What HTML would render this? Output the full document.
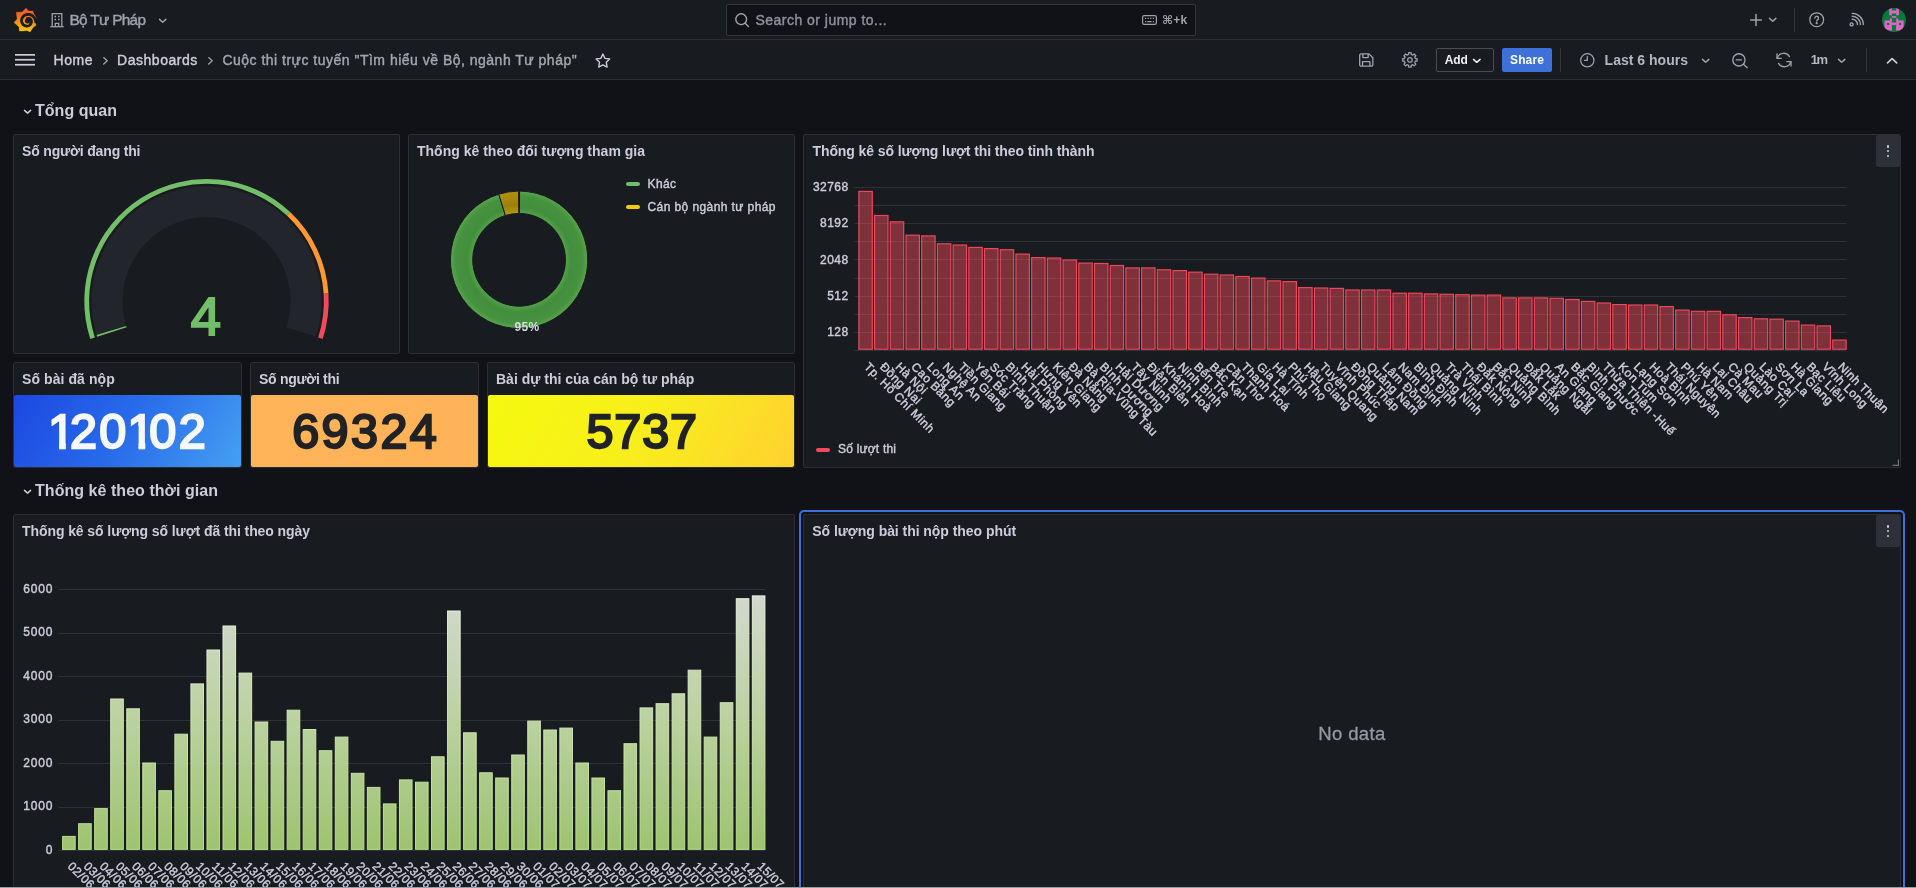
<!DOCTYPE html>
<html lang="vi"><head><meta charset="utf-8"><title>Cuộc thi trực tuyến "Tìm hiểu về Bộ, ngành Tư pháp" - Grafana</title>
<style>
html,body{margin:0;padding:0;background:#111217;}
body{width:1916px;height:888px;overflow:hidden;position:relative;font-family:"Liberation Sans", "DejaVu Sans", sans-serif;color:#ccccdc;}
.t{position:absolute;white-space:nowrap;}
#root{position:absolute;left:0;top:0;width:1916px;height:888px;overflow:hidden;will-change:transform;}
.abs{position:absolute;}
.panel{position:absolute;box-sizing:border-box;background:#181b1f;border:1px solid #2c2e33;border-radius:2px;}
svg{position:absolute;overflow:visible;}
svg text{font-family:"Liberation Sans", "DejaVu Sans", sans-serif;}
.lb text{stroke:#ccccdc;stroke-width:0.4px;}
</style></head><body><div id="root">
<div class="abs" style="left:0;top:0;width:1916px;height:39px;background:#181b1f;border-bottom:1px solid #2c2e33;"></div>
<div class="abs" style="left:0;top:40px;width:1916px;height:39px;background:#181b1f;border-bottom:1px solid #2c2e33;"></div>
<svg class="abs" style="left:4px;top:0" width="46" height="40" viewBox="0 0 1021 888"><defs><linearGradient id="lg" gradientUnits="userSpaceOnUse" x1="0" y1="170" x2="0" y2="715"><stop offset="0" stop-color="#f05a28"/><stop offset="0.3" stop-color="#f26a24"/><stop offset="1" stop-color="#fbca0a"/></linearGradient></defs><path d="M490,178 L545,242 L640,242 L660,302 L712,378 L708,445 L688,470 L712,562 L652,606 L578,710 L510,678 L430,686 L340,688 L333,598 L222,500 L291,420 L270,272 L402,266Z" fill="url(#lg)" stroke="url(#lg)" stroke-width="6" stroke-linejoin="round"/><path d="M708,512 L705,485 L699,459 L693,434 L684,411 L671,390 L657,371 L640,355 L621,342 L601,332 L580,325 L559,321 L538,320 L518,322 L498,325 L479,330 L461,338 L445,348 L430,361 L418,375 L407,390 L399,407 L393,425 L390,442 L390,461 L392,478 L396,495 L403,511 L412,526 L422,540 L435,551 L448,561 L463,568 L478,574 L494,577 L510,577 L526,576 L541,572 L555,566 L567,558 L579,548 L588,538 L596,526 L602,514 L606,501 L609,488 L609,475 L607,462 L602,450 L596,440 L589,430 L581,423 L572,417 L562,412 L553,409 L543,408 L534,409 L526,410 L518,413 L511,418 L506,424" fill="none" stroke="#181b1f" stroke-width="62" stroke-linecap="butt" stroke-linejoin="round"/><circle cx="524" cy="467" r="60" fill="#181b1f"/><path d="M476,515 Q505,556 548,534" fill="none" stroke="#f8a016" stroke-width="18" stroke-linecap="round"/></svg>
<svg style="left:50px;top:12px" width="14" height="16" viewBox="0 0 14 16" fill="none" stroke="#9fa1ae" stroke-width="1.3">
<path d="M2.2 14.6V1.6h9.6v13"/><path d="M0.3 14.7h13.4"/><path d="M5.3 14.6v-3.2h3.4v3.2"/>
<path d="M4.4 4.5h1.6M8 4.5h1.6M4.4 7.5h1.6M8 7.5h1.6" stroke-width="1.5"/></svg>
<div class="t" style="left:69.5px;top:8.70px;font-size:15.4px;line-height:22px;font-weight:400;color:#9fa1ae;letter-spacing:-0.694px;-webkit-text-stroke:0.4px #9fa1ae;">Bộ Tư Pháp</div>
<svg style="left:158.6px;top:19.08px" width="7.4" height="3.85" viewBox="0 0 7.4 3.85" fill="none" stroke="#9fa1ae" stroke-width="1.5" stroke-linecap="round" stroke-linejoin="round"><path d="M0.5 0.4L3.7 3.25L6.9 0.4"/></svg>
<div class="abs" style="left:726px;top:4px;width:468px;height:30px;background:#111217;border:1px solid #33353c;border-radius:2px;"></div>
<svg style="left:735px;top:13px" width="14" height="14" viewBox="0 0 14 14" fill="none" stroke="#9fa1ae" stroke-width="1.4" stroke-linecap="round"><circle cx="6.2" cy="6.2" r="5.4"/><path d="M10.2 10.2L13.4 13.4"/></svg>
<div class="t" style="left:755.5px;top:10.00px;font-size:14px;line-height:20px;font-weight:400;color:#8e909d;letter-spacing:0.475px;-webkit-text-stroke:0.4px #8e909d;">Search or jump to...</div>
<svg style="left:1141.5px;top:15px" width="15" height="10" viewBox="0 0 15 10" fill="none" stroke="#9fa1ae" stroke-width="1.2"><rect x="0.6" y="0.6" width="13.8" height="8.8" rx="1.6"/><path d="M3 3.4h9" stroke-dasharray="1.2 1.4"/><path d="M3 6.6h1.2M5.4 6.6h4.2M10.8 6.6h1.2"/></svg>
<div class="t" style="left:1162px;top:11.50px;font-size:12px;line-height:17px;font-weight:700;color:#9fa1ae;letter-spacing:0.2px;font-family:"DejaVu Sans","Liberation Sans",sans-serif;font-size:11.5px;">⌘+k</div>
<svg style="left:1750px;top:14px" width="12" height="12" viewBox="0 0 12 12" fill="none" stroke="#9fa1ae" stroke-width="1.5" stroke-linecap="round"><path d="M6 0.6v10.8M0.6 6h10.8"/></svg>
<svg style="left:1769.4px;top:18.38px" width="7.4" height="3.85" viewBox="0 0 7.4 3.85" fill="none" stroke="#9fa1ae" stroke-width="1.5" stroke-linecap="round" stroke-linejoin="round"><path d="M0.5 0.4L3.7 3.25L6.9 0.4"/></svg>
<div class="abs" style="left:1794px;top:8px;width:1px;height:24px;background:#34363d"></div>
<svg style="left:1809px;top:12.4px" width="15.4" height="15.4" viewBox="0 0 16 16" fill="none" stroke="#9fa1ae" stroke-width="1.3" stroke-linecap="round"><circle cx="8" cy="8" r="7.2"/><path d="M6.1 6.3a1.9 1.9 0 1 1 2.7 1.8c-.6.3-.8.7-.8 1.3" stroke-width="1.4"/><circle cx="8" cy="11.6" r="0.5" fill="#9fa1ae"/></svg>
<svg style="left:1848.6px;top:13.4px" width="15" height="14" viewBox="0 0 15 14" fill="none" stroke="#9fa1ae" stroke-width="1.4" stroke-linecap="round"><circle cx="2.6" cy="11.4" r="1.5"/><path d="M3.2 6.3a5.3 5.3 0 0 1 5.3 5.3"/><path d="M3.2 3.3a8.3 8.3 0 0 1 8.3 8.3"/><path d="M3.2 0.4a11.2 11.2 0 0 1 11.2 11.2"/></svg>
<svg style="left:1882px;top:8px" width="24" height="24" viewBox="0 0 24 24"><defs><clipPath id="av"><circle cx="12" cy="12" r="12"/></clipPath></defs>
<g clip-path="url(#av)"><rect width="24" height="24" fill="#057a3c"/>
<g fill="#e264c6"><rect x="7.2" y="0" width="2.7" height="7.3"/><rect x="14.2" y="0" width="2.7" height="7.3"/><rect x="9.8" y="2.5" width="4.5" height="2.9"/>
<rect x="9.9" y="8.1" width="4.3" height="1.7"/>
<rect x="7.9" y="10.4" width="2" height="12"/><rect x="14.2" y="10.4" width="2" height="12"/>
<rect x="2.5" y="12.4" width="5.6" height="9"/><rect x="16" y="12.4" width="5.6" height="9"/>
<rect x="9.8" y="14.5" width="4.5" height="2.4"/>
<rect x="5" y="19" width="5" height="3.4"/><rect x="14.2" y="19" width="5" height="3.4"/></g>
<rect x="5" y="14.9" width="2.2" height="2.2" fill="#057a3c"/><rect x="16.9" y="14.9" width="2.2" height="2.2" fill="#057a3c"/>
</g></svg>
<svg style="left:15px;top:54.2px" width="20" height="12" viewBox="0 0 20 12" fill="#ccccdc"><rect y="0" width="20" height="1.7"/><rect y="4.9" width="20" height="1.7"/><rect y="9.9" width="20" height="1.7"/></svg>
<div class="t" style="left:53.6px;top:50.00px;font-size:14px;line-height:20px;font-weight:400;color:#ccccdc;letter-spacing:0.514px;-webkit-text-stroke:0.4px #ccccdc;">Home</div>
<svg style="left:102.6px;top:56.6px" width="5" height="7.6" viewBox="0 0 5 7.6" fill="none" stroke="#9fa1ae" stroke-width="1.3" stroke-linecap="round" stroke-linejoin="round"><path d="M0.7 0.6L4.2 3.8L0.7 7"/></svg>
<div class="t" style="left:117.1px;top:50.00px;font-size:14px;line-height:20px;font-weight:400;color:#ccccdc;letter-spacing:0.522px;-webkit-text-stroke:0.4px #ccccdc;">Dashboards</div>
<svg style="left:208px;top:56.6px" width="5" height="7.6" viewBox="0 0 5 7.6" fill="none" stroke="#9fa1ae" stroke-width="1.3" stroke-linecap="round" stroke-linejoin="round"><path d="M0.7 0.6L4.2 3.8L0.7 7"/></svg>
<div class="t" style="left:222.4px;top:50.00px;font-size:14px;line-height:20px;font-weight:400;color:#a3a5b2;letter-spacing:0.494px;-webkit-text-stroke:0.4px #a3a5b2;">Cuộc thi trực tuyến "Tìm hiểu về Bộ, ngành Tư pháp"</div>
<svg style="left:595.4px;top:52.6px" width="15.8" height="15" viewBox="0 0 24 23" fill="none" stroke="#ccccdc" stroke-width="2.1" stroke-linejoin="round"><path d="M12 1.6l3.2 6.6 7.2 1-5.2 5.1 1.2 7.2-6.4-3.4-6.4 3.4 1.2-7.2-5.2-5.1 7.2-1z"/></svg>
<svg style="left:1358.8px;top:52.8px" width="14.6" height="14" viewBox="0 0 15 14" fill="none" stroke="#9fa1ae" stroke-width="1.35" stroke-linejoin="round"><path d="M0.7 2.2a1.5 1.5 0 0 1 1.5-1.5h8l4 4v7.1a1.5 1.5 0 0 1-1.5 1.5h-10.5a1.5 1.5 0 0 1-1.5-1.5z"/><path d="M4 0.9v3.6h5.4v-3.6"/><path d="M3.6 13.2v-4.6h7.6v4.6"/></svg>
<svg style="left:1401.8px;top:52px" width="15.8" height="15.8" viewBox="0 0 16 16" fill="none" stroke="#9fa1ae" stroke-width="1.3" stroke-linejoin="round"><path d="M6.73,0.71 L9.27,0.71 L9.33,2.46 L10.98,3.14 L12.26,1.95 L14.05,3.74 L12.86,5.02 L13.54,6.67 L15.29,6.73 L15.29,9.27 L13.54,9.33 L12.86,10.98 L14.05,12.26 L12.26,14.05 L10.98,12.86 L9.33,13.54 L9.27,15.29 L6.73,15.29 L6.67,13.54 L5.02,12.86 L3.74,14.05 L1.95,12.26 L3.14,10.98 L2.46,9.33 L0.71,9.27 L0.71,6.73 L2.46,6.67 L3.14,5.02 L1.95,3.74 L3.74,1.95 L5.02,3.14 L6.67,2.46Z"/><circle cx="8" cy="8" r="2.3"/></svg>
<div class="abs" style="left:1436px;top:48px;width:56px;height:22px;border:1px solid #4a4c55;border-radius:2px;"></div>
<div class="t" style="left:1444.8px;top:51.50px;font-size:12px;line-height:17px;font-weight:700;color:#f0f0f5;letter-spacing:-0.164px;">Add</div>
<svg style="left:1473.2px;top:58.62px" width="7.6" height="3.95" viewBox="0 0 7.6 3.95" fill="none" stroke="#f0f0f5" stroke-width="1.5" stroke-linecap="round" stroke-linejoin="round"><path d="M0.5 0.4L3.8 3.35L7.1 0.4"/></svg>
<div class="abs" style="left:1502px;top:48px;width:50px;height:24px;background:#3d71d9;border-radius:2px;"></div>
<div class="t" style="left:1510px;top:51.50px;font-size:12px;line-height:17px;font-weight:700;color:#ffffff;letter-spacing:0.135px;">Share</div>
<div class="abs" style="left:1560px;top:48px;width:1px;height:24px;background:#34363d"></div>
<svg style="left:1579.5px;top:52.7px" width="14.6" height="14.6" viewBox="0 0 15 15" fill="none" stroke="#9fa1ae" stroke-width="1.3" stroke-linecap="round" stroke-linejoin="round"><circle cx="7.5" cy="7.5" r="6.8"/><path d="M7.5 3.6v4.1h-2.8"/></svg>
<div class="t" style="left:1604.6px;top:50.00px;font-size:14px;line-height:20px;font-weight:700;color:#b4b6c4;letter-spacing:0.014px;">Last 6 hours</div>
<svg style="left:1702.3px;top:58.68px" width="7.4" height="3.85" viewBox="0 0 7.4 3.85" fill="none" stroke="#9fa1ae" stroke-width="1.5" stroke-linecap="round" stroke-linejoin="round"><path d="M0.5 0.4L3.7 3.25L6.9 0.4"/></svg>
<svg style="left:1732px;top:52.5px" width="16" height="15.4" viewBox="0 0 16 15.4" fill="none" stroke="#9fa1ae" stroke-width="1.35" stroke-linecap="round"><circle cx="6.9" cy="6.9" r="6.1"/><path d="M11.4 11.2L15.2 14.7M4.3 6.9h5.2"/></svg>
<svg style="left:1776px;top:52px" width="16" height="16" viewBox="0 0 16 16" fill="none" stroke="#9fa1ae" stroke-width="1.35" stroke-linecap="round" stroke-linejoin="round"><path d="M1.2 6.4A6.6 6.6 0 0 1 13.4 4.6"/><path d="M14.8 9.6A6.6 6.6 0 0 1 2.6 11.4"/><path d="M1 2v4.4h4.2"/><path d="M15 14v-4.4h-4.2"/></svg>
<div class="t" style="left:1810.7px;top:51.00px;font-size:13px;line-height:18px;font-weight:700;color:#b4b6c4;letter-spacing:-1.297px;">1m</div>
<svg style="left:1837.6px;top:58.68px" width="7.4" height="3.85" viewBox="0 0 7.4 3.85" fill="none" stroke="#9fa1ae" stroke-width="1.5" stroke-linecap="round" stroke-linejoin="round"><path d="M0.5 0.4L3.7 3.25L6.9 0.4"/></svg>
<div class="abs" style="left:1866px;top:48px;width:1px;height:24px;background:#34363d"></div>
<svg style="left:1887px;top:58.35px" width="10.2" height="5.30" viewBox="0 0 10.2 5.30" fill="none" stroke="#ccccdc" stroke-width="1.7" stroke-linecap="round" stroke-linejoin="round"><path d="M0.5 4.90L5.1 0.6L9.7 4.90"/></svg>
<svg style="left:23.5px;top:110.45px" width="7.1" height="3.69" viewBox="0 0 7.1 3.69" fill="none" stroke="#ccccdc" stroke-width="1.5" stroke-linecap="round" stroke-linejoin="round"><path d="M0.5 0.4L3.55 3.09L6.6 0.4"/></svg>
<div class="t" style="left:35px;top:100.10px;font-size:16px;line-height:22px;font-weight:700;color:#ccccdc;letter-spacing:0.029px;">Tổng quan</div>
<svg style="left:23.5px;top:490.45px" width="7.1" height="3.69" viewBox="0 0 7.1 3.69" fill="none" stroke="#ccccdc" stroke-width="1.5" stroke-linecap="round" stroke-linejoin="round"><path d="M0.5 0.4L3.55 3.09L6.6 0.4"/></svg>
<div class="t" style="left:35px;top:480.10px;font-size:16px;line-height:22px;font-weight:700;color:#ccccdc;letter-spacing:0.044px;">Thống kê theo thời gian</div>
<div class="panel" style="left:13px;top:134px;width:387px;height:220px;"></div>
<div class="t" style="left:22px;top:141.00px;font-size:14px;line-height:20px;font-weight:700;color:#ccccdc;letter-spacing:-0.168px;">Số người đang thi</div>
<div class="panel" style="left:408px;top:134px;width:387px;height:220px;"></div>
<div class="t" style="left:417px;top:141.00px;font-size:14px;line-height:20px;font-weight:700;color:#ccccdc;letter-spacing:0.008px;">Thống kê theo đối tượng tham gia</div>
<div class="panel" style="left:803px;top:134px;width:1098px;height:334px;"></div>
<div class="t" style="left:812.5px;top:141.00px;font-size:14px;line-height:20px;font-weight:700;color:#ccccdc;letter-spacing:-0.096px;">Thống kê số lượng lượt thi theo tỉnh thành</div>
<svg style="left:0;top:0" width="400" height="360" viewBox="0 0 400 360"><path d="M97.13,336.74 A115,115 0 1 1 315.87,336.74 L286.39,327.16 A84,84 0 1 0 126.61,327.16Z" fill="#22252b"/><path d="M90.28,338.96 A122.2,122.2 0 0 1 290.15,212.12 L286.87,215.62 A117.4,117.4 0 0 0 94.85,337.48Z" fill="#73bf69"/><path d="M290.15,212.12 A122.2,122.2 0 0 1 328.46,293.53 L323.67,293.83 A117.4,117.4 0 0 0 286.87,215.62Z" fill="#ff9830"/><path d="M328.46,293.53 A122.2,122.2 0 0 1 322.72,338.96 L318.15,337.48 A117.4,117.4 0 0 0 323.67,293.83Z" fill="#f2495c"/><path d="M97.13,336.74 A115,115 0 0 1 96.58,335.01 L126.21,325.90 A84,84 0 0 0 126.61,327.16Z" fill="#73bf69"/><text x="205.9" y="334.6" text-anchor="middle" font-size="54.2" font-weight="400" fill="#73bf69" stroke="#73bf69" stroke-width="2.1" stroke-linejoin="miter">4</text></svg>
<svg style="left:0;top:0" width="800" height="360" viewBox="0 0 800 360"><defs><radialGradient id="dg" gradientUnits="userSpaceOnUse" cx="519.1" cy="259.8" r="68.7"><stop offset="0.66" stop-color="#56a64b"/><stop offset="0.76" stop-color="#438e3c"/><stop offset="0.92" stop-color="#46923f"/><stop offset="1" stop-color="#57a64c"/></radialGradient><radialGradient id="dy" gradientUnits="userSpaceOnUse" cx="519.1" cy="259.8" r="68.7"><stop offset="0.66" stop-color="#b89a10"/><stop offset="0.8" stop-color="#9c800c"/><stop offset="1" stop-color="#b0920e"/></radialGradient></defs><path d="M519.58,191.10 A68.7,68.7 0 1 1 498.79,194.17 L505.38,215.47 A46.4,46.4 0 1 0 519.42,213.40Z" fill="url(#dg)" stroke="#181b1f" stroke-width="1"/><path d="M498.79,194.17 A68.7,68.7 0 0 1 518.62,191.10 L518.78,213.40 A46.4,46.4 0 0 0 505.38,215.47Z" fill="url(#dy)" stroke="#181b1f" stroke-width="1"/><text x="527" y="331" text-anchor="middle" font-size="12" font-weight="700" fill="#d8d9e4" stroke="#181b1f" stroke-width="0" letter-spacing="0.3">95%</text></svg>
<div class="abs" style="left:626px;top:181.6px;width:14px;height:4px;border-radius:2px;background:#73bf69"></div>
<div class="t" style="left:647.5px;top:176.10px;font-size:12px;line-height:17px;font-weight:400;color:#ccccdc;letter-spacing:0.414px;-webkit-text-stroke:0.4px #ccccdc;">Khác</div>
<div class="abs" style="left:626px;top:204.6px;width:14px;height:4px;border-radius:2px;background:#f2cc0c"></div>
<div class="t" style="left:647.5px;top:198.90px;font-size:12px;line-height:17px;font-weight:400;color:#ccccdc;letter-spacing:0.414px;-webkit-text-stroke:0.4px #ccccdc;">Cán bộ ngành tư pháp</div>
<div class="panel" style="left:13px;top:362px;width:229px;height:106px;"></div>
<div class="t" style="left:22px;top:369.00px;font-size:14px;line-height:20px;font-weight:700;color:#ccccdc;letter-spacing:0.077px;">Số bài đã nộp</div>
<div class="abs" style="left:14px;top:395px;width:227px;height:72px;background:linear-gradient(120deg,#1c48e1 0%,#296cea 50%,#45a0f2 100%);border-radius:2px;"></div>
<div class="t" style="left:14px;width:227px;top:395.4px;height:72px;line-height:72px;text-align:center;font-size:48.5px;font-weight:400;color:#f7f8fa;-webkit-text-stroke:2.3px #f7f8fa;"><span style="display:inline-block;vertical-align:top;height:72px;margin:0 -6.15px 0 -0.22px;clip-path:polygon(3.12px 0,17.93px 0,17.93px 72px,11.20px 72px,11.20px 30.64px,3.12px 30.64px)">1</span><span style="display:inline-block;vertical-align:top;height:72px;margin:0 1.21px">2</span><span style="display:inline-block;vertical-align:top;height:72px;margin:0 1.21px">0</span><span style="display:inline-block;vertical-align:top;height:72px;margin:0 -6.15px 0 -0.22px;clip-path:polygon(3.12px 0,17.93px 0,17.93px 72px,11.20px 72px,11.20px 30.64px,3.12px 30.64px)">1</span><span style="display:inline-block;vertical-align:top;height:72px;margin:0 1.21px">0</span><span style="display:inline-block;vertical-align:top;height:72px;margin:0 1.21px">2</span></div>
<div class="panel" style="left:250px;top:362px;width:229px;height:106px;"></div>
<div class="t" style="left:259px;top:369.00px;font-size:14px;line-height:20px;font-weight:700;color:#ccccdc;letter-spacing:-0.296px;">Số người thi</div>
<div class="abs" style="left:251px;top:395px;width:227px;height:72px;background:linear-gradient(120deg,#ffb45a,#ffb357);border-radius:2px;"></div>
<div class="t" style="left:251px;width:227px;top:395.4px;height:72px;line-height:72px;text-align:center;font-size:48.5px;font-weight:400;color:#202226;-webkit-text-stroke:2.3px #202226;"><span style="display:inline-block;vertical-align:top;height:72px;margin:0 1.21px">6</span><span style="display:inline-block;vertical-align:top;height:72px;margin:0 1.21px">9</span><span style="display:inline-block;vertical-align:top;height:72px;margin:0 1.21px">3</span><span style="display:inline-block;vertical-align:top;height:72px;margin:0 1.21px">2</span><span style="display:inline-block;vertical-align:top;height:72px;margin:0 1.21px">4</span></div>
<div class="panel" style="left:487px;top:362px;width:308px;height:106px;"></div>
<div class="t" style="left:496px;top:369.00px;font-size:14px;line-height:20px;font-weight:700;color:#ccccdc;letter-spacing:-0.0px;">Bài dự thi của cán bộ tư pháp</div>
<div class="abs" style="left:488px;top:395px;width:306px;height:72px;background:linear-gradient(120deg,#f5f90e 0%,#f8ee1c 50%,#ffd130 100%);border-radius:2px;"></div>
<div class="t" style="left:488px;width:306px;top:395.4px;height:72px;line-height:72px;text-align:center;font-size:48.5px;font-weight:400;color:#202226;-webkit-text-stroke:2.3px #202226;"><span style="display:inline-block;vertical-align:top;height:72px;margin:0 1.21px">5</span><span style="display:inline-block;vertical-align:top;height:72px;margin:0 -0.29px">7</span><span style="display:inline-block;vertical-align:top;height:72px;margin:0 1.21px">3</span><span style="display:inline-block;vertical-align:top;height:72px;margin:0 -0.29px">7</span></div>
<svg class="lb" style="left:0;top:0" width="1916" height="480" viewBox="0 0 1916 480"><line x1="854.5" x2="1846.5" y1="187.5" y2="187.5" stroke="#2f3136" stroke-width="1"/><line x1="854.5" x2="1846.5" y1="205.5" y2="205.5" stroke="#2f3136" stroke-width="1"/><line x1="854.5" x2="1846.5" y1="223.5" y2="223.5" stroke="#2f3136" stroke-width="1"/><line x1="854.5" x2="1846.5" y1="241.5" y2="241.5" stroke="#2f3136" stroke-width="1"/><line x1="854.5" x2="1846.5" y1="259.5" y2="259.5" stroke="#2f3136" stroke-width="1"/><line x1="854.5" x2="1846.5" y1="278.5" y2="278.5" stroke="#2f3136" stroke-width="1"/><line x1="854.5" x2="1846.5" y1="296.5" y2="296.5" stroke="#2f3136" stroke-width="1"/><line x1="854.5" x2="1846.5" y1="314.5" y2="314.5" stroke="#2f3136" stroke-width="1"/><line x1="854.5" x2="1846.5" y1="332.5" y2="332.5" stroke="#2f3136" stroke-width="1"/><line x1="854.5" x2="1846.5" y1="350.5" y2="350.5" stroke="#2f3136" stroke-width="1"/><text x="848.6" y="191.2" text-anchor="end" font-size="12" fill="#ccccdc" letter-spacing="0.45">32768</text><text x="848.6" y="227.4" text-anchor="end" font-size="12" fill="#ccccdc" letter-spacing="0.45">8192</text><text x="848.6" y="263.7" text-anchor="end" font-size="12" fill="#ccccdc" letter-spacing="0.45">2048</text><text x="848.6" y="299.9" text-anchor="end" font-size="12" fill="#ccccdc" letter-spacing="0.45">512</text><text x="848.6" y="336.2" text-anchor="end" font-size="12" fill="#ccccdc" letter-spacing="0.45">128</text><rect x="858.87" y="191.4" width="13.4" height="157.8" fill="#f2495c" fill-opacity="0.47" stroke="#e8485c" stroke-width="1.2"/><rect x="874.58" y="215.5" width="13.4" height="133.7" fill="#f2495c" fill-opacity="0.47" stroke="#e8485c" stroke-width="1.2"/><rect x="890.29" y="221.8" width="13.4" height="127.4" fill="#f2495c" fill-opacity="0.47" stroke="#e8485c" stroke-width="1.2"/><rect x="906.00" y="235.2" width="13.4" height="114.0" fill="#f2495c" fill-opacity="0.47" stroke="#e8485c" stroke-width="1.2"/><rect x="921.71" y="235.9" width="13.4" height="113.3" fill="#f2495c" fill-opacity="0.47" stroke="#e8485c" stroke-width="1.2"/><rect x="937.41" y="243.8" width="13.4" height="105.4" fill="#f2495c" fill-opacity="0.47" stroke="#e8485c" stroke-width="1.2"/><rect x="953.12" y="245.0" width="13.4" height="104.2" fill="#f2495c" fill-opacity="0.47" stroke="#e8485c" stroke-width="1.2"/><rect x="968.83" y="247.4" width="13.4" height="101.8" fill="#f2495c" fill-opacity="0.47" stroke="#e8485c" stroke-width="1.2"/><rect x="984.54" y="248.6" width="13.4" height="100.6" fill="#f2495c" fill-opacity="0.47" stroke="#e8485c" stroke-width="1.2"/><rect x="1000.25" y="249.7" width="13.4" height="99.5" fill="#f2495c" fill-opacity="0.47" stroke="#e8485c" stroke-width="1.2"/><rect x="1015.95" y="254.1" width="13.4" height="95.1" fill="#f2495c" fill-opacity="0.47" stroke="#e8485c" stroke-width="1.2"/><rect x="1031.66" y="257.6" width="13.4" height="91.6" fill="#f2495c" fill-opacity="0.47" stroke="#e8485c" stroke-width="1.2"/><rect x="1047.37" y="258.0" width="13.4" height="91.2" fill="#f2495c" fill-opacity="0.47" stroke="#e8485c" stroke-width="1.2"/><rect x="1063.08" y="260.0" width="13.4" height="89.2" fill="#f2495c" fill-opacity="0.47" stroke="#e8485c" stroke-width="1.2"/><rect x="1078.79" y="263.1" width="13.4" height="86.1" fill="#f2495c" fill-opacity="0.47" stroke="#e8485c" stroke-width="1.2"/><rect x="1094.49" y="263.5" width="13.4" height="85.7" fill="#f2495c" fill-opacity="0.47" stroke="#e8485c" stroke-width="1.2"/><rect x="1110.20" y="265.5" width="13.4" height="83.7" fill="#f2495c" fill-opacity="0.47" stroke="#e8485c" stroke-width="1.2"/><rect x="1125.91" y="267.9" width="13.4" height="81.3" fill="#f2495c" fill-opacity="0.47" stroke="#e8485c" stroke-width="1.2"/><rect x="1141.62" y="267.9" width="13.4" height="81.3" fill="#f2495c" fill-opacity="0.47" stroke="#e8485c" stroke-width="1.2"/><rect x="1157.33" y="269.8" width="13.4" height="79.4" fill="#f2495c" fill-opacity="0.47" stroke="#e8485c" stroke-width="1.2"/><rect x="1173.03" y="270.6" width="13.4" height="78.6" fill="#f2495c" fill-opacity="0.47" stroke="#e8485c" stroke-width="1.2"/><rect x="1188.74" y="272.2" width="13.4" height="77.0" fill="#f2495c" fill-opacity="0.47" stroke="#e8485c" stroke-width="1.2"/><rect x="1204.45" y="274.2" width="13.4" height="75.0" fill="#f2495c" fill-opacity="0.47" stroke="#e8485c" stroke-width="1.2"/><rect x="1220.16" y="275.0" width="13.4" height="74.2" fill="#f2495c" fill-opacity="0.47" stroke="#e8485c" stroke-width="1.2"/><rect x="1235.87" y="276.5" width="13.4" height="72.7" fill="#f2495c" fill-opacity="0.47" stroke="#e8485c" stroke-width="1.2"/><rect x="1251.57" y="278.1" width="13.4" height="71.1" fill="#f2495c" fill-opacity="0.47" stroke="#e8485c" stroke-width="1.2"/><rect x="1267.28" y="280.9" width="13.4" height="68.3" fill="#f2495c" fill-opacity="0.47" stroke="#e8485c" stroke-width="1.2"/><rect x="1282.99" y="281.6" width="13.4" height="67.6" fill="#f2495c" fill-opacity="0.47" stroke="#e8485c" stroke-width="1.2"/><rect x="1298.70" y="287.6" width="13.4" height="61.6" fill="#f2495c" fill-opacity="0.47" stroke="#e8485c" stroke-width="1.2"/><rect x="1314.41" y="288.0" width="13.4" height="61.2" fill="#f2495c" fill-opacity="0.47" stroke="#e8485c" stroke-width="1.2"/><rect x="1330.11" y="288.4" width="13.4" height="60.8" fill="#f2495c" fill-opacity="0.47" stroke="#e8485c" stroke-width="1.2"/><rect x="1345.82" y="290.0" width="13.4" height="59.2" fill="#f2495c" fill-opacity="0.47" stroke="#e8485c" stroke-width="1.2"/><rect x="1361.53" y="290.0" width="13.4" height="59.2" fill="#f2495c" fill-opacity="0.47" stroke="#e8485c" stroke-width="1.2"/><rect x="1377.24" y="290.0" width="13.4" height="59.2" fill="#f2495c" fill-opacity="0.47" stroke="#e8485c" stroke-width="1.2"/><rect x="1392.95" y="293.2" width="13.4" height="56.0" fill="#f2495c" fill-opacity="0.47" stroke="#e8485c" stroke-width="1.2"/><rect x="1408.65" y="293.2" width="13.4" height="56.0" fill="#f2495c" fill-opacity="0.47" stroke="#e8485c" stroke-width="1.2"/><rect x="1424.36" y="293.9" width="13.4" height="55.3" fill="#f2495c" fill-opacity="0.47" stroke="#e8485c" stroke-width="1.2"/><rect x="1440.07" y="294.3" width="13.4" height="54.9" fill="#f2495c" fill-opacity="0.47" stroke="#e8485c" stroke-width="1.2"/><rect x="1455.78" y="294.7" width="13.4" height="54.5" fill="#f2495c" fill-opacity="0.47" stroke="#e8485c" stroke-width="1.2"/><rect x="1471.49" y="295.1" width="13.4" height="54.1" fill="#f2495c" fill-opacity="0.47" stroke="#e8485c" stroke-width="1.2"/><rect x="1487.19" y="295.1" width="13.4" height="54.1" fill="#f2495c" fill-opacity="0.47" stroke="#e8485c" stroke-width="1.2"/><rect x="1502.90" y="297.9" width="13.4" height="51.3" fill="#f2495c" fill-opacity="0.47" stroke="#e8485c" stroke-width="1.2"/><rect x="1518.61" y="297.9" width="13.4" height="51.3" fill="#f2495c" fill-opacity="0.47" stroke="#e8485c" stroke-width="1.2"/><rect x="1534.32" y="297.9" width="13.4" height="51.3" fill="#f2495c" fill-opacity="0.47" stroke="#e8485c" stroke-width="1.2"/><rect x="1550.03" y="298.3" width="13.4" height="50.9" fill="#f2495c" fill-opacity="0.47" stroke="#e8485c" stroke-width="1.2"/><rect x="1565.73" y="299.5" width="13.4" height="49.7" fill="#f2495c" fill-opacity="0.47" stroke="#e8485c" stroke-width="1.2"/><rect x="1581.44" y="301.4" width="13.4" height="47.8" fill="#f2495c" fill-opacity="0.47" stroke="#e8485c" stroke-width="1.2"/><rect x="1597.15" y="303.0" width="13.4" height="46.2" fill="#f2495c" fill-opacity="0.47" stroke="#e8485c" stroke-width="1.2"/><rect x="1612.86" y="304.6" width="13.4" height="44.6" fill="#f2495c" fill-opacity="0.47" stroke="#e8485c" stroke-width="1.2"/><rect x="1628.57" y="305.0" width="13.4" height="44.2" fill="#f2495c" fill-opacity="0.47" stroke="#e8485c" stroke-width="1.2"/><rect x="1644.27" y="305.0" width="13.4" height="44.2" fill="#f2495c" fill-opacity="0.47" stroke="#e8485c" stroke-width="1.2"/><rect x="1659.98" y="306.6" width="13.4" height="42.6" fill="#f2495c" fill-opacity="0.47" stroke="#e8485c" stroke-width="1.2"/><rect x="1675.69" y="310.1" width="13.4" height="39.1" fill="#f2495c" fill-opacity="0.47" stroke="#e8485c" stroke-width="1.2"/><rect x="1691.40" y="311.3" width="13.4" height="37.9" fill="#f2495c" fill-opacity="0.47" stroke="#e8485c" stroke-width="1.2"/><rect x="1707.11" y="311.3" width="13.4" height="37.9" fill="#f2495c" fill-opacity="0.47" stroke="#e8485c" stroke-width="1.2"/><rect x="1722.81" y="314.8" width="13.4" height="34.4" fill="#f2495c" fill-opacity="0.47" stroke="#e8485c" stroke-width="1.2"/><rect x="1738.52" y="317.6" width="13.4" height="31.6" fill="#f2495c" fill-opacity="0.47" stroke="#e8485c" stroke-width="1.2"/><rect x="1754.23" y="318.8" width="13.4" height="30.4" fill="#f2495c" fill-opacity="0.47" stroke="#e8485c" stroke-width="1.2"/><rect x="1769.94" y="319.2" width="13.4" height="30.0" fill="#f2495c" fill-opacity="0.47" stroke="#e8485c" stroke-width="1.2"/><rect x="1785.65" y="321.1" width="13.4" height="28.1" fill="#f2495c" fill-opacity="0.47" stroke="#e8485c" stroke-width="1.2"/><rect x="1801.35" y="325.1" width="13.4" height="24.1" fill="#f2495c" fill-opacity="0.47" stroke="#e8485c" stroke-width="1.2"/><rect x="1817.06" y="325.9" width="13.4" height="23.3" fill="#f2495c" fill-opacity="0.47" stroke="#e8485c" stroke-width="1.2"/><rect x="1832.77" y="340.1" width="13.4" height="9.1" fill="#f2495c" fill-opacity="0.47" stroke="#e8485c" stroke-width="1.2"/><text transform="translate(863.42,367.45) rotate(45)" font-size="12" fill="#ccccdc" letter-spacing="0.42">Tp. Hồ Chí Minh</text><text transform="translate(879.13,367.45) rotate(45)" font-size="12" fill="#ccccdc" letter-spacing="0.42">Đồng Nai</text><text transform="translate(894.84,367.45) rotate(45)" font-size="12" fill="#ccccdc" letter-spacing="0.42">Hà Nội</text><text transform="translate(910.55,367.45) rotate(45)" font-size="12" fill="#ccccdc" letter-spacing="0.42">Cao Bằng</text><text transform="translate(926.26,367.45) rotate(45)" font-size="12" fill="#ccccdc" letter-spacing="0.42">Long An</text><text transform="translate(941.96,367.45) rotate(45)" font-size="12" fill="#ccccdc" letter-spacing="0.42">Nghệ An</text><text transform="translate(957.67,367.45) rotate(45)" font-size="12" fill="#ccccdc" letter-spacing="0.42">Tiền Giang</text><text transform="translate(973.38,367.45) rotate(45)" font-size="12" fill="#ccccdc" letter-spacing="0.42">Yên Bái</text><text transform="translate(989.09,367.45) rotate(45)" font-size="12" fill="#ccccdc" letter-spacing="0.42">Sóc Trăng</text><text transform="translate(1004.80,367.45) rotate(45)" font-size="12" fill="#ccccdc" letter-spacing="0.42">Bình Thuận</text><text transform="translate(1020.50,367.45) rotate(45)" font-size="12" fill="#ccccdc" letter-spacing="0.42">Hải Phòng</text><text transform="translate(1036.21,367.45) rotate(45)" font-size="12" fill="#ccccdc" letter-spacing="0.42">Hưng Yên</text><text transform="translate(1051.92,367.45) rotate(45)" font-size="12" fill="#ccccdc" letter-spacing="0.42">Kiên Giang</text><text transform="translate(1067.63,367.45) rotate(45)" font-size="12" fill="#ccccdc" letter-spacing="0.42">Đà Nẵng</text><text transform="translate(1083.34,367.45) rotate(45)" font-size="12" fill="#ccccdc" letter-spacing="0.42">Bà Rịa-Vũng Tàu</text><text transform="translate(1099.04,367.45) rotate(45)" font-size="12" fill="#ccccdc" letter-spacing="0.42">Bình Dương</text><text transform="translate(1114.75,367.45) rotate(45)" font-size="12" fill="#ccccdc" letter-spacing="0.42">Hải Dương</text><text transform="translate(1130.46,367.45) rotate(45)" font-size="12" fill="#ccccdc" letter-spacing="0.42">Tây Ninh</text><text transform="translate(1146.17,367.45) rotate(45)" font-size="12" fill="#ccccdc" letter-spacing="0.42">Điện Biên</text><text transform="translate(1161.88,367.45) rotate(45)" font-size="12" fill="#ccccdc" letter-spacing="0.42">Khánh Hoà</text><text transform="translate(1177.58,367.45) rotate(45)" font-size="12" fill="#ccccdc" letter-spacing="0.42">Ninh Bình</text><text transform="translate(1193.29,367.45) rotate(45)" font-size="12" fill="#ccccdc" letter-spacing="0.42">Bến Tre</text><text transform="translate(1209.00,367.45) rotate(45)" font-size="12" fill="#ccccdc" letter-spacing="0.42">Bắc Kạn</text><text transform="translate(1224.71,367.45) rotate(45)" font-size="12" fill="#ccccdc" letter-spacing="0.42">Cần Thơ</text><text transform="translate(1240.42,367.45) rotate(45)" font-size="12" fill="#ccccdc" letter-spacing="0.42">Thanh Hoá</text><text transform="translate(1256.12,367.45) rotate(45)" font-size="12" fill="#ccccdc" letter-spacing="0.42">Gia Lai</text><text transform="translate(1271.83,367.45) rotate(45)" font-size="12" fill="#ccccdc" letter-spacing="0.42">Hà Tĩnh</text><text transform="translate(1287.54,367.45) rotate(45)" font-size="12" fill="#ccccdc" letter-spacing="0.42">Phú Thọ</text><text transform="translate(1303.25,367.45) rotate(45)" font-size="12" fill="#ccccdc" letter-spacing="0.42">Hậu Giang</text><text transform="translate(1318.96,367.45) rotate(45)" font-size="12" fill="#ccccdc" letter-spacing="0.42">Tuyên Quang</text><text transform="translate(1334.66,367.45) rotate(45)" font-size="12" fill="#ccccdc" letter-spacing="0.42">Vĩnh Phúc</text><text transform="translate(1350.37,367.45) rotate(45)" font-size="12" fill="#ccccdc" letter-spacing="0.42">Đồng Tháp</text><text transform="translate(1366.08,367.45) rotate(45)" font-size="12" fill="#ccccdc" letter-spacing="0.42">Quảng Nam</text><text transform="translate(1381.79,367.45) rotate(45)" font-size="12" fill="#ccccdc" letter-spacing="0.42">Lâm Đồng</text><text transform="translate(1397.50,367.45) rotate(45)" font-size="12" fill="#ccccdc" letter-spacing="0.42">Nam Định</text><text transform="translate(1413.20,367.45) rotate(45)" font-size="12" fill="#ccccdc" letter-spacing="0.42">Bình Định</text><text transform="translate(1428.91,367.45) rotate(45)" font-size="12" fill="#ccccdc" letter-spacing="0.42">Quảng Ninh</text><text transform="translate(1444.62,367.45) rotate(45)" font-size="12" fill="#ccccdc" letter-spacing="0.42">Trà Vinh</text><text transform="translate(1460.33,367.45) rotate(45)" font-size="12" fill="#ccccdc" letter-spacing="0.42">Thái Bình</text><text transform="translate(1476.04,367.45) rotate(45)" font-size="12" fill="#ccccdc" letter-spacing="0.42">Đắk Nông</text><text transform="translate(1491.74,367.45) rotate(45)" font-size="12" fill="#ccccdc" letter-spacing="0.42">Bắc Ninh</text><text transform="translate(1507.45,367.45) rotate(45)" font-size="12" fill="#ccccdc" letter-spacing="0.42">Quảng Bình</text><text transform="translate(1523.16,367.45) rotate(45)" font-size="12" fill="#ccccdc" letter-spacing="0.42">Đắk Lắk</text><text transform="translate(1538.87,367.45) rotate(45)" font-size="12" fill="#ccccdc" letter-spacing="0.42">Quảng Ngãi</text><text transform="translate(1554.58,367.45) rotate(45)" font-size="12" fill="#ccccdc" letter-spacing="0.42">An Giang</text><text transform="translate(1570.28,367.45) rotate(45)" font-size="12" fill="#ccccdc" letter-spacing="0.42">Bắc Giang</text><text transform="translate(1585.99,367.45) rotate(45)" font-size="12" fill="#ccccdc" letter-spacing="0.42">Bình Phước</text><text transform="translate(1601.70,367.45) rotate(45)" font-size="12" fill="#ccccdc" letter-spacing="0.42">Thừa Thiên -Huế</text><text transform="translate(1617.41,367.45) rotate(45)" font-size="12" fill="#ccccdc" letter-spacing="0.42">Kon Tum</text><text transform="translate(1633.12,367.45) rotate(45)" font-size="12" fill="#ccccdc" letter-spacing="0.42">Lạng Sơn</text><text transform="translate(1648.82,367.45) rotate(45)" font-size="12" fill="#ccccdc" letter-spacing="0.42">Hoà Bình</text><text transform="translate(1664.53,367.45) rotate(45)" font-size="12" fill="#ccccdc" letter-spacing="0.42">Thái Nguyên</text><text transform="translate(1680.24,367.45) rotate(45)" font-size="12" fill="#ccccdc" letter-spacing="0.42">Phú Yên</text><text transform="translate(1695.95,367.45) rotate(45)" font-size="12" fill="#ccccdc" letter-spacing="0.42">Hà Nam</text><text transform="translate(1711.66,367.45) rotate(45)" font-size="12" fill="#ccccdc" letter-spacing="0.42">Lai Châu</text><text transform="translate(1727.36,367.45) rotate(45)" font-size="12" fill="#ccccdc" letter-spacing="0.42">Cà Mau</text><text transform="translate(1743.07,367.45) rotate(45)" font-size="12" fill="#ccccdc" letter-spacing="0.42">Quảng Trị</text><text transform="translate(1758.78,367.45) rotate(45)" font-size="12" fill="#ccccdc" letter-spacing="0.42">Lào Cai</text><text transform="translate(1774.49,367.45) rotate(45)" font-size="12" fill="#ccccdc" letter-spacing="0.42">Sơn La</text><text transform="translate(1790.20,367.45) rotate(45)" font-size="12" fill="#ccccdc" letter-spacing="0.42">Hà Giang</text><text transform="translate(1805.90,367.45) rotate(45)" font-size="12" fill="#ccccdc" letter-spacing="0.42">Bạc Liêu</text><text transform="translate(1821.61,367.45) rotate(45)" font-size="12" fill="#ccccdc" letter-spacing="0.42">Vĩnh Long</text><text transform="translate(1837.32,367.45) rotate(45)" font-size="12" fill="#ccccdc" letter-spacing="0.42">Ninh Thuận</text></svg>
<div class="abs" style="left:816px;top:447.6px;width:14px;height:4px;border-radius:2px;background:#f2495c"></div>
<div class="t" style="left:838px;top:440.70px;font-size:12px;line-height:17px;font-weight:400;color:#ccccdc;letter-spacing:0.208px;-webkit-text-stroke:0.4px #ccccdc;">Số lượt thi</div>
<div class="abs" style="left:1876px;top:135px;width:24px;height:32px;background:#2e3037;border-radius:2px;"></div>
<div class="abs" style="left:1886.9px;top:145.3px;width:2.3px;height:2.3px;border-radius:1.2px;background:#ccccdc"></div>
<div class="abs" style="left:1886.9px;top:149.9px;width:2.3px;height:2.3px;border-radius:1.2px;background:#ccccdc"></div>
<div class="abs" style="left:1886.9px;top:154.5px;width:2.3px;height:2.3px;border-radius:1.2px;background:#ccccdc"></div>
<svg style="left:1892px;top:459px" width="7" height="7" viewBox="0 0 7 7" fill="none" stroke="#6e7079" stroke-width="1.2"><path d="M6.4 0.5v5.9h-5.9"/></svg>
<div class="panel" style="left:13px;top:514px;width:782px;height:400px;"></div>
<div class="t" style="left:22px;top:521.00px;font-size:14px;line-height:20px;font-weight:700;color:#ccccdc;letter-spacing:-0.083px;">Thống kê số lượng số lượt đã thi theo ngày</div>
<svg class="lb" style="left:0;top:0" width="800" height="888" viewBox="0 0 800 888"><defs><linearGradient id="bg" gradientUnits="userSpaceOnUse" x1="0" y1="850" x2="0" y2="589"><stop offset="0" stop-color="#9ec36f"/><stop offset="0.5" stop-color="#bbd29f"/><stop offset="1" stop-color="#d3d9cf"/></linearGradient><linearGradient id="bs" gradientUnits="userSpaceOnUse" x1="0" y1="850" x2="0" y2="589"><stop offset="0" stop-color="#b2df84"/><stop offset="0.5" stop-color="#d0e6b6"/><stop offset="1" stop-color="#edf2e6"/></linearGradient></defs><line x1="58.5" x2="765" y1="850.5" y2="850.5" stroke="#2f3136" stroke-width="1"/><text x="53.4" y="853.8" text-anchor="end" font-size="12" fill="#ccccdc" letter-spacing="0.85">0</text><line x1="58.5" x2="765" y1="807.5" y2="807.5" stroke="#2f3136" stroke-width="1"/><text x="53.4" y="810.3" text-anchor="end" font-size="12" fill="#ccccdc" letter-spacing="0.85">1000</text><line x1="58.5" x2="765" y1="763.5" y2="763.5" stroke="#2f3136" stroke-width="1"/><text x="53.4" y="766.8" text-anchor="end" font-size="12" fill="#ccccdc" letter-spacing="0.85">2000</text><line x1="58.5" x2="765" y1="720.5" y2="720.5" stroke="#2f3136" stroke-width="1"/><text x="53.4" y="723.3" text-anchor="end" font-size="12" fill="#ccccdc" letter-spacing="0.85">3000</text><line x1="58.5" x2="765" y1="676.5" y2="676.5" stroke="#2f3136" stroke-width="1"/><text x="53.4" y="679.8" text-anchor="end" font-size="12" fill="#ccccdc" letter-spacing="0.85">4000</text><line x1="58.5" x2="765" y1="633.5" y2="633.5" stroke="#2f3136" stroke-width="1"/><text x="53.4" y="636.3" text-anchor="end" font-size="12" fill="#ccccdc" letter-spacing="0.85">5000</text><line x1="58.5" x2="765" y1="589.5" y2="589.5" stroke="#2f3136" stroke-width="1"/><text x="53.4" y="592.8" text-anchor="end" font-size="12" fill="#ccccdc" letter-spacing="0.85">6000</text><rect x="62.60" y="836.4" width="12.6" height="13.0" fill="url(#bg)" stroke="url(#bs)" stroke-width="1"/><rect x="78.64" y="823.7" width="12.6" height="25.7" fill="url(#bg)" stroke="url(#bs)" stroke-width="1"/><rect x="94.68" y="808.6" width="12.6" height="40.8" fill="url(#bg)" stroke="url(#bs)" stroke-width="1"/><rect x="110.72" y="699.0" width="12.6" height="150.4" fill="url(#bg)" stroke="url(#bs)" stroke-width="1"/><rect x="126.76" y="708.8" width="12.6" height="140.6" fill="url(#bg)" stroke="url(#bs)" stroke-width="1"/><rect x="142.80" y="763.0" width="12.6" height="86.4" fill="url(#bg)" stroke="url(#bs)" stroke-width="1"/><rect x="158.84" y="790.7" width="12.6" height="58.7" fill="url(#bg)" stroke="url(#bs)" stroke-width="1"/><rect x="174.88" y="734.2" width="12.6" height="115.1" fill="url(#bg)" stroke="url(#bs)" stroke-width="1"/><rect x="190.92" y="683.9" width="12.6" height="165.5" fill="url(#bg)" stroke="url(#bs)" stroke-width="1"/><rect x="206.96" y="650.0" width="12.6" height="199.4" fill="url(#bg)" stroke="url(#bs)" stroke-width="1"/><rect x="223.00" y="626.0" width="12.6" height="223.4" fill="url(#bg)" stroke="url(#bs)" stroke-width="1"/><rect x="239.04" y="673.1" width="12.6" height="176.3" fill="url(#bg)" stroke="url(#bs)" stroke-width="1"/><rect x="255.08" y="722.0" width="12.6" height="127.4" fill="url(#bg)" stroke="url(#bs)" stroke-width="1"/><rect x="271.12" y="741.3" width="12.6" height="108.1" fill="url(#bg)" stroke="url(#bs)" stroke-width="1"/><rect x="287.16" y="710.2" width="12.6" height="139.1" fill="url(#bg)" stroke="url(#bs)" stroke-width="1"/><rect x="303.20" y="729.5" width="12.6" height="119.9" fill="url(#bg)" stroke="url(#bs)" stroke-width="1"/><rect x="319.24" y="750.7" width="12.6" height="98.7" fill="url(#bg)" stroke="url(#bs)" stroke-width="1"/><rect x="335.28" y="737.1" width="12.6" height="112.3" fill="url(#bg)" stroke="url(#bs)" stroke-width="1"/><rect x="351.32" y="773.3" width="12.6" height="76.1" fill="url(#bg)" stroke="url(#bs)" stroke-width="1"/><rect x="367.36" y="787.4" width="12.6" height="62.0" fill="url(#bg)" stroke="url(#bs)" stroke-width="1"/><rect x="383.40" y="803.9" width="12.6" height="45.5" fill="url(#bg)" stroke="url(#bs)" stroke-width="1"/><rect x="399.44" y="779.9" width="12.6" height="69.5" fill="url(#bg)" stroke="url(#bs)" stroke-width="1"/><rect x="415.48" y="782.2" width="12.6" height="67.1" fill="url(#bg)" stroke="url(#bs)" stroke-width="1"/><rect x="431.52" y="756.8" width="12.6" height="92.6" fill="url(#bg)" stroke="url(#bs)" stroke-width="1"/><rect x="447.56" y="611.0" width="12.6" height="238.4" fill="url(#bg)" stroke="url(#bs)" stroke-width="1"/><rect x="463.60" y="732.8" width="12.6" height="116.6" fill="url(#bg)" stroke="url(#bs)" stroke-width="1"/><rect x="479.64" y="772.8" width="12.6" height="76.6" fill="url(#bg)" stroke="url(#bs)" stroke-width="1"/><rect x="495.68" y="778.0" width="12.6" height="71.4" fill="url(#bg)" stroke="url(#bs)" stroke-width="1"/><rect x="511.72" y="755.0" width="12.6" height="94.4" fill="url(#bg)" stroke="url(#bs)" stroke-width="1"/><rect x="527.76" y="721.1" width="12.6" height="128.3" fill="url(#bg)" stroke="url(#bs)" stroke-width="1"/><rect x="543.80" y="730.0" width="12.6" height="119.4" fill="url(#bg)" stroke="url(#bs)" stroke-width="1"/><rect x="559.84" y="728.1" width="12.6" height="121.3" fill="url(#bg)" stroke="url(#bs)" stroke-width="1"/><rect x="575.88" y="763.0" width="12.6" height="86.4" fill="url(#bg)" stroke="url(#bs)" stroke-width="1"/><rect x="591.92" y="778.0" width="12.6" height="71.4" fill="url(#bg)" stroke="url(#bs)" stroke-width="1"/><rect x="607.96" y="790.7" width="12.6" height="58.7" fill="url(#bg)" stroke="url(#bs)" stroke-width="1"/><rect x="624.00" y="743.7" width="12.6" height="105.7" fill="url(#bg)" stroke="url(#bs)" stroke-width="1"/><rect x="640.04" y="707.9" width="12.6" height="141.5" fill="url(#bg)" stroke="url(#bs)" stroke-width="1"/><rect x="656.08" y="703.7" width="12.6" height="145.7" fill="url(#bg)" stroke="url(#bs)" stroke-width="1"/><rect x="672.12" y="693.8" width="12.6" height="155.6" fill="url(#bg)" stroke="url(#bs)" stroke-width="1"/><rect x="688.16" y="670.2" width="12.6" height="179.1" fill="url(#bg)" stroke="url(#bs)" stroke-width="1"/><rect x="704.20" y="737.1" width="12.6" height="112.3" fill="url(#bg)" stroke="url(#bs)" stroke-width="1"/><rect x="720.24" y="702.7" width="12.6" height="146.7" fill="url(#bg)" stroke="url(#bs)" stroke-width="1"/><rect x="736.28" y="598.7" width="12.6" height="250.7" fill="url(#bg)" stroke="url(#bs)" stroke-width="1"/><rect x="752.32" y="595.9" width="12.6" height="253.5" fill="url(#bg)" stroke="url(#bs)" stroke-width="1"/><text transform="translate(67.00,866.9) rotate(45)" font-size="12" fill="#ccccdc" letter-spacing="0.4">02/06</text><text transform="translate(83.04,866.9) rotate(45)" font-size="12" fill="#ccccdc" letter-spacing="0.4">03/06</text><text transform="translate(99.08,866.9) rotate(45)" font-size="12" fill="#ccccdc" letter-spacing="0.4">04/06</text><text transform="translate(115.12,866.9) rotate(45)" font-size="12" fill="#ccccdc" letter-spacing="0.4">05/06</text><text transform="translate(131.16,866.9) rotate(45)" font-size="12" fill="#ccccdc" letter-spacing="0.4">06/06</text><text transform="translate(147.20,866.9) rotate(45)" font-size="12" fill="#ccccdc" letter-spacing="0.4">07/06</text><text transform="translate(163.24,866.9) rotate(45)" font-size="12" fill="#ccccdc" letter-spacing="0.4">08/06</text><text transform="translate(179.28,866.9) rotate(45)" font-size="12" fill="#ccccdc" letter-spacing="0.4">09/06</text><text transform="translate(195.32,866.9) rotate(45)" font-size="12" fill="#ccccdc" letter-spacing="0.4">10/06</text><text transform="translate(211.36,866.9) rotate(45)" font-size="12" fill="#ccccdc" letter-spacing="0.4">11/06</text><text transform="translate(227.40,866.9) rotate(45)" font-size="12" fill="#ccccdc" letter-spacing="0.4">12/06</text><text transform="translate(243.44,866.9) rotate(45)" font-size="12" fill="#ccccdc" letter-spacing="0.4">13/06</text><text transform="translate(259.48,866.9) rotate(45)" font-size="12" fill="#ccccdc" letter-spacing="0.4">14/06</text><text transform="translate(275.52,866.9) rotate(45)" font-size="12" fill="#ccccdc" letter-spacing="0.4">15/06</text><text transform="translate(291.56,866.9) rotate(45)" font-size="12" fill="#ccccdc" letter-spacing="0.4">16/06</text><text transform="translate(307.60,866.9) rotate(45)" font-size="12" fill="#ccccdc" letter-spacing="0.4">17/06</text><text transform="translate(323.64,866.9) rotate(45)" font-size="12" fill="#ccccdc" letter-spacing="0.4">18/06</text><text transform="translate(339.68,866.9) rotate(45)" font-size="12" fill="#ccccdc" letter-spacing="0.4">19/06</text><text transform="translate(355.72,866.9) rotate(45)" font-size="12" fill="#ccccdc" letter-spacing="0.4">20/06</text><text transform="translate(371.76,866.9) rotate(45)" font-size="12" fill="#ccccdc" letter-spacing="0.4">21/06</text><text transform="translate(387.80,866.9) rotate(45)" font-size="12" fill="#ccccdc" letter-spacing="0.4">22/06</text><text transform="translate(403.84,866.9) rotate(45)" font-size="12" fill="#ccccdc" letter-spacing="0.4">23/06</text><text transform="translate(419.88,866.9) rotate(45)" font-size="12" fill="#ccccdc" letter-spacing="0.4">24/06</text><text transform="translate(435.92,866.9) rotate(45)" font-size="12" fill="#ccccdc" letter-spacing="0.4">25/06</text><text transform="translate(451.96,866.9) rotate(45)" font-size="12" fill="#ccccdc" letter-spacing="0.4">26/06</text><text transform="translate(468.00,866.9) rotate(45)" font-size="12" fill="#ccccdc" letter-spacing="0.4">27/06</text><text transform="translate(484.04,866.9) rotate(45)" font-size="12" fill="#ccccdc" letter-spacing="0.4">28/06</text><text transform="translate(500.08,866.9) rotate(45)" font-size="12" fill="#ccccdc" letter-spacing="0.4">29/06</text><text transform="translate(516.12,866.9) rotate(45)" font-size="12" fill="#ccccdc" letter-spacing="0.4">30/06</text><text transform="translate(532.16,866.9) rotate(45)" font-size="12" fill="#ccccdc" letter-spacing="0.4">01/07</text><text transform="translate(548.20,866.9) rotate(45)" font-size="12" fill="#ccccdc" letter-spacing="0.4">02/07</text><text transform="translate(564.24,866.9) rotate(45)" font-size="12" fill="#ccccdc" letter-spacing="0.4">03/07</text><text transform="translate(580.28,866.9) rotate(45)" font-size="12" fill="#ccccdc" letter-spacing="0.4">04/07</text><text transform="translate(596.32,866.9) rotate(45)" font-size="12" fill="#ccccdc" letter-spacing="0.4">05/07</text><text transform="translate(612.36,866.9) rotate(45)" font-size="12" fill="#ccccdc" letter-spacing="0.4">06/07</text><text transform="translate(628.40,866.9) rotate(45)" font-size="12" fill="#ccccdc" letter-spacing="0.4">07/07</text><text transform="translate(644.44,866.9) rotate(45)" font-size="12" fill="#ccccdc" letter-spacing="0.4">08/07</text><text transform="translate(660.48,866.9) rotate(45)" font-size="12" fill="#ccccdc" letter-spacing="0.4">09/07</text><text transform="translate(676.52,866.9) rotate(45)" font-size="12" fill="#ccccdc" letter-spacing="0.4">10/07</text><text transform="translate(692.56,866.9) rotate(45)" font-size="12" fill="#ccccdc" letter-spacing="0.4">11/07</text><text transform="translate(708.60,866.9) rotate(45)" font-size="12" fill="#ccccdc" letter-spacing="0.4">12/07</text><text transform="translate(724.64,866.9) rotate(45)" font-size="12" fill="#ccccdc" letter-spacing="0.4">13/07</text><text transform="translate(740.68,866.9) rotate(45)" font-size="12" fill="#ccccdc" letter-spacing="0.4">14/07</text><text transform="translate(756.72,866.9) rotate(45)" font-size="12" fill="#ccccdc" letter-spacing="0.4">15/07</text></svg>
<div class="abs" style="left:799px;top:510px;width:1102px;height:400px;border:2px solid #3d71d9;border-radius:5px;"></div>
<div class="panel" style="left:803px;top:514px;width:1098px;height:400px;"></div>
<div class="t" style="left:812.3px;top:521.00px;font-size:14px;line-height:20px;font-weight:700;color:#ccccdc;letter-spacing:-0.047px;">Số lượng bài thi nộp theo phút</div>
<div class="abs" style="left:1876px;top:515px;width:24px;height:32px;background:#2e3037;border-radius:2px;"></div>
<div class="abs" style="left:1886.9px;top:525.3px;width:2.3px;height:2.3px;border-radius:1.2px;background:#ccccdc"></div>
<div class="abs" style="left:1886.9px;top:529.9px;width:2.3px;height:2.3px;border-radius:1.2px;background:#ccccdc"></div>
<div class="abs" style="left:1886.9px;top:534.5px;width:2.3px;height:2.3px;border-radius:1.2px;background:#ccccdc"></div>
<div class="t" style="left:1318.3px;top:721.30px;font-size:18.5px;line-height:26px;font-weight:400;color:#9698a6;letter-spacing:0.367px;-webkit-text-stroke:0.3px #9698a6;">No data</div>
<div class="abs" style="left:0;top:886.7px;width:1916px;height:1.3px;background:#93a09c"></div>
</div></body></html>
